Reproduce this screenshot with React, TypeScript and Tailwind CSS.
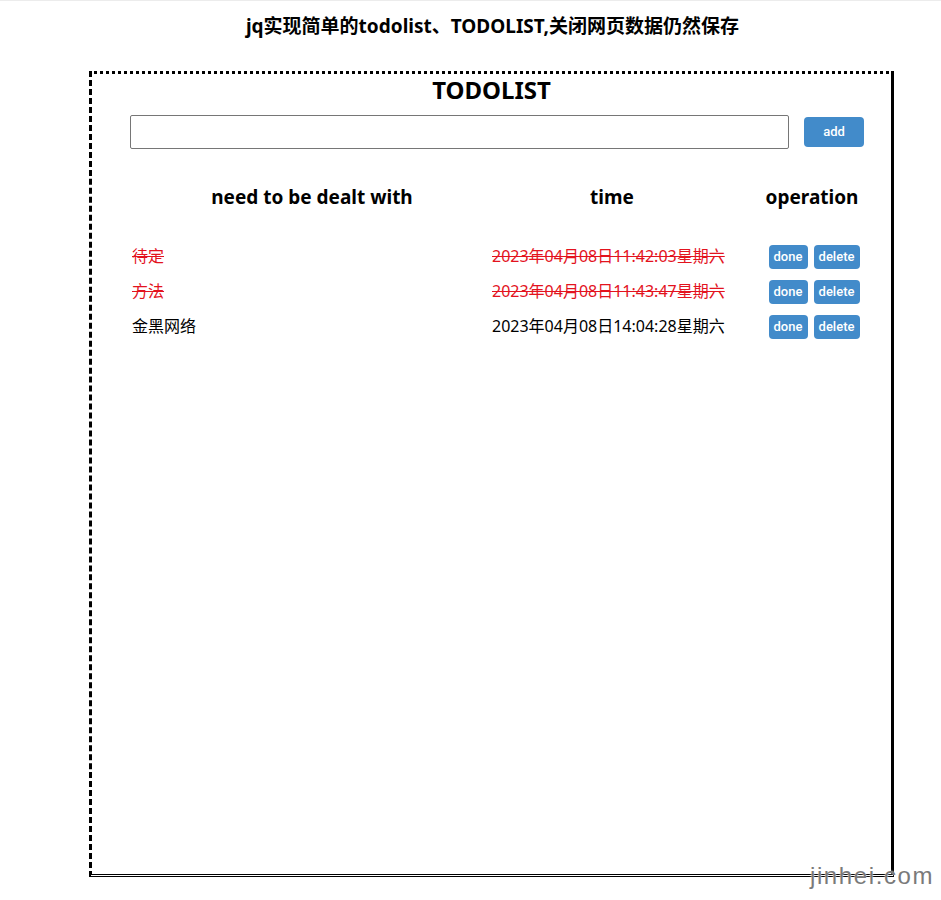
import React from "react"

type Todo = {
  title: string
  time: string
  done: boolean
}

const todos: Todo[] = [
  { title: "待定", time: "2023年04月08日11:42:03星期六", done: true },
  { title: "方法", time: "2023年04月08日11:43:47星期六", done: true },
  { title: "金黑网络", time: "2023年04月08日14:04:28星期六", done: false },
]

const font = { fontFamily: '"Noto Sans", "Noto Sans CJK SC", sans-serif' }
const btnFont = { fontFamily: "Roboto, Arial, sans-serif" }

export default function App() {
  return (
    <div className="relative min-h-[900px] w-[941px] bg-white border-t border-[#ececec] text-black" style={font}>
      <h2 className="pl-[44px] pt-[11px] text-center text-[19px] font-bold leading-[28px]">
        jq实现简单的todolist、TODOLIST,关闭网页数据仍然保存
      </h2>

      <div className="ml-[89px] mt-[31px] h-[806px] w-[805px] border-[3px] border-black [border-style:dotted_solid_double_dashed]">
        <h1 className="text-center text-[24px] font-bold leading-[32px]">TODOLIST</h1>

        <div className="mt-[9px] ml-[38px] flex items-center">
          <input
            type="text"
            className="h-[34px] w-[659px] rounded-[2px] border border-[#767676] outline-none"
          />
          <button
            className="ml-[15px] h-[30px] w-[60px] rounded-[4px] bg-[#428bca] text-[13px] font-medium text-white"
            style={btnFont}
          >
            add
          </button>
        </div>

        <div className="ml-[40px] mt-[31px] grid grid-cols-[360px_240px_160px] text-[19px] font-bold leading-[34px]">
          <div className="text-center">need to be dealt with</div>
          <div className="text-center">time</div>
          <div className="text-center">operation</div>
        </div>

        <div className="ml-[40px] mt-[24px] flex flex-col">
          {todos.map((t) => (
            <div
              key={t.time}
              className="grid h-[35px] grid-cols-[360px_240px_160px] items-center text-[16px]"
            >
              <div className={t.done ? "text-[#e3131e] line-through" : ""}>{t.title}</div>
              <div className={t.done ? "text-[#e3131e] line-through" : ""}>{t.time}</div>
              <div className="flex justify-center gap-[6px] pl-[4px] pt-[2px]">
                <button
                  className="h-[24px] w-[39px] rounded-[4px] bg-[#428bca] text-[13px] font-medium text-white"
                  style={btnFont}
                >
                  done
                </button>
                <button
                  className="h-[24px] w-[46px] rounded-[4px] bg-[#428bca] text-[13px] font-medium text-white"
                  style={btnFont}
                >
                  delete
                </button>
              </div>
            </div>
          ))}
        </div>
      </div>

      <div
        className="absolute left-[810px] top-[860px] text-[24px] leading-[30px] tracking-[1.6px] text-[#7a7a7a]"
        style={{ fontFamily: '"Liberation Sans", Arial, sans-serif', textShadow: "0 0 2px #fff" }}
      >
        jinhei.com
      </div>
    </div>
  )
}
